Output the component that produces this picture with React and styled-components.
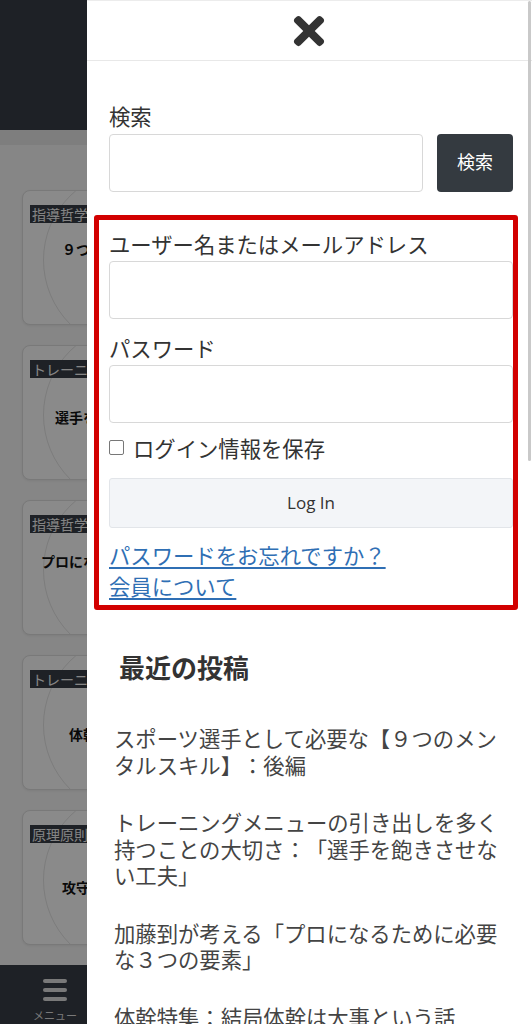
import React from "react";
import styled, { createGlobalStyle } from "styled-components";
import { FaTimes } from "react-icons/fa";

const GlobalStyle = createGlobalStyle`
  html, body {
    margin: 0;
    padding: 0;
  }
  body {
    font-family: "Noto Sans CJK JP", "Noto Sans", sans-serif;
    background: #fff;
    text-spacing-trim: space-all;
  }
`;

const Screen = styled.div`
  display: flex;
  width: 532px;
  height: 1024px;
  overflow: hidden;
`;

// the page behind the drawer (only a sliver shows)
const Behind = styled.div`
  position: relative;
  flex: 0 0 87px;
  overflow: hidden;
  background: #f5f5f5;
  display: flex;
  flex-direction: column;
`;

const Dim = styled.div`
  position: absolute;
  inset: 0;
  background: rgba(0, 0, 0, 0.45);
`;

const SiteHeader = styled.div`
  flex: 0 0 130px;
  width: 532px;
  background: #383d46;
`;

const SubBar = styled.div`
  flex: 0 0 15px;
  width: 532px;
  background: #e6e6e6;
`;

const CardList = styled.div`
  flex: 1;
  width: 532px;
  padding: 45px 0 0 22px;
  display: flex;
  flex-direction: column;
  gap: 20px;
  overflow: hidden;
`;

const Card = styled.div`
  position: relative;
  flex: 0 0 135px;
  width: 220px;
  box-sizing: border-box;
  background: #fbfbfb;
  border: 1px solid #dcdcdc;
  border-radius: 8px;
  box-shadow: 0 1px 3px rgba(0, 0, 0, 0.08);
  overflow: hidden;
  padding: 10px 0 0 7px;
`;

const Ring = styled.div`
  position: absolute;
  left: 20px;
  top: -22px;
  width: 180px;
  height: 180px;
  border-radius: 50%;
  border: 1px solid rgba(0, 0, 0, 0.1);
`;

const Tag = styled.span`
  position: relative;
  display: inline-block;
  background: #383d46;
  color: #f2f2f2;
  font-size: 14px;
  line-height: 18px;
  padding: 0 2px;
`;

const CardTitle = styled.div`
  position: relative;
  margin-top: ${(p) => p.$top}px;
  margin-right: 7px;
  text-align: center;
  font-size: 14px;
  line-height: 20px;
  font-weight: 700;
  color: #111;
  white-space: nowrap;
`;

const BottomNav = styled.div`
  flex: 0 0 59px;
  width: 532px;
  background: #383d46;
  display: flex;
`;

const NavItem = styled.div`
  width: 110px;
  display: flex;
  flex-direction: column;
  align-items: center;
  padding-top: 14px;
  color: #ddd;
  font-size: 11px;
  line-height: 14px;
  gap: 7px;
`;

// drawer
const Drawer = styled.div`
  position: relative;
  flex: 1;
  background: #fff;
  display: flex;
  flex-direction: column;
  border-top: 1px solid #ececec;
`;

const Scroll = styled.div`
  position: absolute;
  top: 0;
  right: 1px;
  width: 3px;
  height: 460px;
  border-radius: 2px;
  background: #c9c9c9;
`;

const DrawerHead = styled.div`
  flex: 0 0 59px;
  display: flex;
  align-items: center;
  justify-content: center;
  border-bottom: 1px solid #e8e8e8;
  color: #333;
  padding-right: 2px;
`;

const DrawerBody = styled.div`
  padding: 40px 19px 0 22px;
`;

const FieldLabel = styled.div`
  font-size: 21.33px;
  line-height: 29px;
  color: #333;
  margin-top: ${(p) => p.$gap || 0}px;
`;

const SearchRow = styled.div`
  display: flex;
  gap: 14px;
  margin-top: 1px;
`;

const TextInput = styled.input`
  display: block;
  box-sizing: border-box;
  width: 100%;
  height: 58px;
  margin: 3px 0 0;
  border: 1px solid #d8d8d8;
  border-radius: 4px;
  background: #fff;
  font-size: 18px;
  padding: 0 12px;
  flex: 1;
  min-width: 0;
`;

const SearchButton = styled.button`
  flex: 0 0 76px;
  height: 58px;
  margin-top: 3px;
  padding: 0 0 5px;
  border: none;
  border-radius: 4px;
  background: #343a40;
  color: #fff;
  font-family: "Noto Sans CJK JP", sans-serif;
  font-size: 18px;
`;

const LoginForm = styled.div`
  position: relative;
  margin-top: 37px;

  &::after {
    content: "";
    position: absolute;
    top: -14px;
    left: -15px;
    right: -5px;
    bottom: -9px;
    border: 5px solid #d20000;
    border-radius: 3px;
    pointer-events: none;
  }
`;

const CheckRow = styled.label`
  display: flex;
  align-items: center;
  gap: 9px;
  margin-top: 10px;
  height: 29px;
  font-size: 21.33px;
  color: #333;
`;

const CheckBox = styled.span`
  width: 15px;
  height: 15px;
  box-sizing: border-box;
  border: 1px solid #777;
  border-radius: 2px;
  background: #fff;
`;

const LoginButton = styled.button`
  display: block;
  width: 100%;
  height: 50px;
  margin-top: 16px;
  padding: 0 0 2px;
  border: 1px solid #e2e5e9;
  border-radius: 3px;
  background: #f3f5f8;
  color: #333;
  font-family: "Open Sans", sans-serif;
  font-size: 17px;
`;

const FormLink = styled.a`
  display: block;
  font-size: 21.33px;
  line-height: 31px;
  color: #2f6fb4;
  text-decoration: underline;
  text-underline-offset: 3px;
  margin-top: ${(p) => p.$gap || 0}px;
`;

const WidgetTitle = styled.h2`
  margin: 48px 0 0;
  padding-left: 10px;
  font-size: 26px;
  line-height: 36px;
  font-weight: 700;
  color: #333;
`;

const PostList = styled.ul`
  list-style: none;
  margin: 40px 0 0;
  padding: 0 5px;
`;

const PostItem = styled.li`
  font-size: 21.33px;
  line-height: 26.5px;
  color: #444;
  & + & {
    margin-top: 31px;
  }
`;

const cards = [
  { tag: "指導哲学", title: "９つのメンタルスキル", top: 14 },
  { tag: "トレーニング", title: "選手を飽きさせない工夫", top: 27 },
  { tag: "指導哲学", title: "プロになるための３つの要素", top: 16 },
  { tag: "トレーニング", title: "体幹は大事という話", top: 34 },
  { tag: "原理原則", title: "攻守の切り替えの原則", top: 32 },
];

const posts = [
  "スポーツ選手として必要な【９つのメンタルスキル】：後編",
  "トレーニングメニューの引き出しを多く持つことの大切さ：「選手を飽きさせない工夫」",
  "加藤到が考える「プロになるために必要な３つの要素」",
  "体幹特集：結局体幹は大事という話",
];

function MenuIcon() {
  return (
    <svg width="24" height="22" viewBox="0 0 24 22">
      <rect x="0" y="0" width="24" height="4" rx="2" fill="#ddd" />
      <rect x="0" y="9" width="24" height="4" rx="2" fill="#ddd" />
      <rect x="0" y="18" width="24" height="4" rx="2" fill="#ddd" />
    </svg>
  );
}

export default function App() {
  return (
    <>
      <GlobalStyle />
      <Screen>
        <Behind>
          <SiteHeader />
          <SubBar />
          <CardList>
            {cards.map((c, i) => (
              <Card key={i}>
                <Ring />
                <Tag>{c.tag}</Tag>
                <CardTitle $top={c.top}>{c.title}</CardTitle>
              </Card>
            ))}
          </CardList>
          <BottomNav>
            <NavItem>
              <MenuIcon />
              メニュー
            </NavItem>
          </BottomNav>
          <Dim />
        </Behind>

        <Drawer>
          <DrawerHead>
            <FaTimes size={44} />
          </DrawerHead>
          <DrawerBody>
            <FieldLabel>検索</FieldLabel>
            <SearchRow>
              <TextInput type="text" />
              <SearchButton>検索</SearchButton>
            </SearchRow>

            <LoginForm>
              <FieldLabel>ユーザー名またはメールアドレス</FieldLabel>
              <TextInput type="text" />
              <FieldLabel $gap={14}>パスワード</FieldLabel>
              <TextInput type="password" />
              <CheckRow>
                <CheckBox />
                ログイン情報を保存
              </CheckRow>
              <LoginButton>Log In</LoginButton>
              <FormLink href="#" $gap={11}>
                パスワードをお忘れですか？
              </FormLink>
              <FormLink href="#">会員について</FormLink>
            </LoginForm>

            <WidgetTitle>最近の投稿</WidgetTitle>
            <PostList>
              {posts.map((p, i) => (
                <PostItem key={i}>{p}</PostItem>
              ))}
            </PostList>
          </DrawerBody>
          <Scroll />
        </Drawer>
      </Screen>
    </>
  );
}
